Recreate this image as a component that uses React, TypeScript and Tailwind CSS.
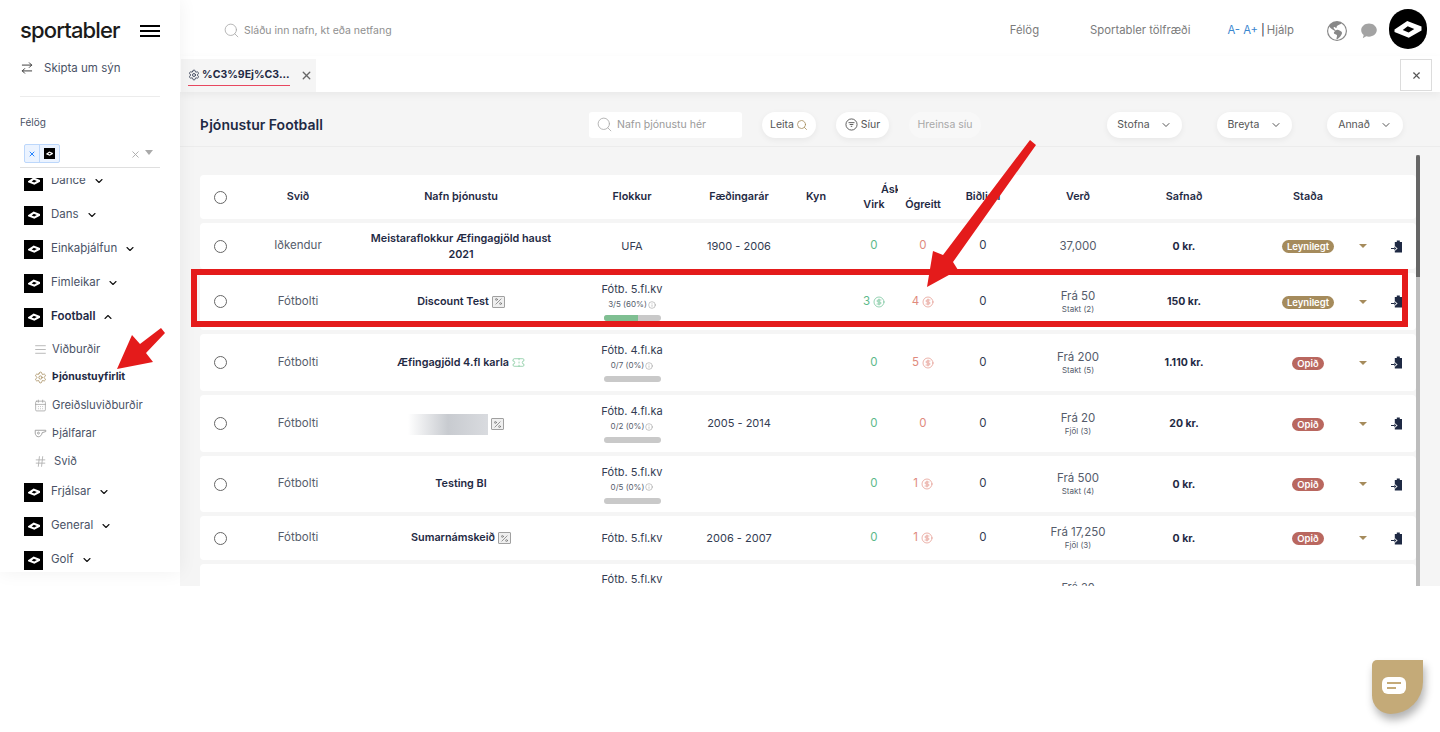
import React from "react";
import { ArrowRightLeft, Search, ChevronDown, ChevronUp, Settings, X, CalendarDays, Hash, AlignJustify, CircleDollarSign, Percent, Ticket, Info } from "lucide-react";
import { BsGlobeAmericas } from "react-icons/bs";

const GRID = "grid grid-cols-[40px_116px_210px_132px_82px_72px_44px_54px_66px_124px_88px_40px_80px_30px_38px] items-center shrink-0";

function Glyph({ className = "" }: { className?: string }) {
  return (
    <svg viewBox="0 0 24 24" className={className} fill="#fff" fillRule="evenodd">
      <path d="M3 12.4 L11.5 6.6 L21 10.4 L21 13 L12.500 17.800 L3 14 Z M8.500 12.600 L12.400 14.400 L16.200 12 L11.800 10.200 Z" />
    </svg>
  );
}

function SportIcon() {
  return (
    <span className="flex w-[19px] h-[19px] bg-black items-center justify-center shrink-0">
      <Glyph className="w-[16px] h-[16px]" />
    </span>
  );
}

function SideItem({ label, open, bold }: { label: string; open?: boolean; bold?: boolean }) {
  return (
    <div className="h-[34px] flex items-center pl-6">
      <SportIcon />
      <span className={`ml-2 text-[11.5px] ${bold ? "font-semibold text-[#1f2a44]" : "text-[#4a5266]"}`}>{label}</span>
      {open ? <ChevronUp className="ml-[7px] w-[12px] h-[12px] text-[#111]" strokeWidth={2.2} /> : <ChevronDown className="ml-[7px] w-[12px] h-[12px] text-[#111]" strokeWidth={2.2} />}
    </div>
  );
}

function Whistle() {
  return (
    <svg viewBox="0 0 16 16" className="w-[13px] h-[13px]" fill="none" stroke="#999" strokeWidth="1.1">
      <path d="M1.500 4h13v1.600l-4.500 1.400c-.3 3-2.300 5-4.700 5C3 12 1.500 9.500 1.500 7.500Z" />
      <circle cx="5.500" cy="7.500" r="1.200" />
    </svg>
  );
}

function SubItem({ icon, label, bold, pad = "ml-[5px]" }: { icon: React.ReactNode; label: string; bold?: boolean; pad?: string }) {
  return (
    <div className="h-[28px] flex items-center pl-[33px]">
      <span className="w-[14px] flex justify-center shrink-0">{icon}</span>
      <span className={`${pad} ${bold ? "text-[10.500px] font-bold text-[#1f2a44]" : "text-[11.3px] text-[#4a5266]"}`}>{label}</span>
    </div>
  );
}

function Sidebar() {
  return (
    <aside className="w-[180px] h-[572px] shrink-0 bg-white flex flex-col shadow-[0_0_18px_rgba(0,0,0,0.06)] relative z-10">
      <div className="h-[56px] shrink-0 pl-5 pr-5 flex items-center justify-between">
        <span className="text-[22px] font-medium tracking-[-0.85px] text-[#1b1b1b] leading-none mt-[3px]">sportabler</span>
        <span className="flex flex-col gap-[3px] mt-[6px]">
          <span className="w-5 h-[2px] bg-black" />
          <span className="w-5 h-[2px] bg-black" />
          <span className="w-5 h-[2px] bg-black" />
        </span>
      </div>
      <div className="mx-5 h-[41px] shrink-0 border-b border-[#ececec] flex items-start pt-[4px]">
        <ArrowRightLeft className="w-[14px] h-[14px] text-[#333] mt-[1px]" strokeWidth={1.6} />
        <span className="ml-[10px] text-[11.5px] text-[#4a5266]">Skipta um sýn</span>
      </div>
      <div className="mx-5 mt-[18px] text-[10px] leading-[14px] text-[#4a5266]">Félög</div>
      <div className="mx-5 mt-[15px] h-[24px] border-b border-[#dfdfdf] flex items-start pl-1 pr-1 shrink-0">
        <span className="flex h-[19px] w-[36px] border border-[#bcd7fb] rounded-[2px] bg-[#ebf3ff]">
          <span className="w-[15px] flex items-center justify-center border-r border-[#bcd7fb]">
            <X className="w-[8px] h-[8px] text-[#2684ff]" strokeWidth={3} />
          </span>
          <span className="flex-1 flex items-center justify-center">
            <span className="flex w-[11px] h-[11px] bg-black items-center justify-center"><Glyph className="w-[9px] h-[9px]" /></span>
          </span>
        </span>
        <X className="ml-auto mt-[5px] w-[11px] h-[11px] text-[#aaa]" strokeWidth={2} />
        <span className="ml-[4px] mt-[6px] mr-[3px] w-0 h-0 border-l-[4px] border-r-[4px] border-t-[5px] border-l-transparent border-r-transparent border-t-[#aaa]" />
      </div>
      <div className="flex-1 overflow-hidden mt-[10px]">
        <div className="-mt-[14px]">
          <SideItem label="Dance" />
          <SideItem label="Dans" />
          <SideItem label="Einkaþjálfun" />
          <SideItem label="Fimleikar" />
          <SideItem label="Football" open bold />
          <div className="mt-[1px]">
            <SubItem icon={<AlignJustify className="w-[13px] h-[13px] text-[#aaa]" strokeWidth={1.5} />} label="Viðburðir" />
            <SubItem icon={<Settings className="w-[13px] h-[13px] text-[#a58b5c]" strokeWidth={1.5} />} label="Þjónustuyfirlit" bold />
            <SubItem icon={<CalendarDays className="w-[13px] h-[13px] text-[#999]" strokeWidth={1.3} />} label="Greiðsluviðburðir" />
            <SubItem icon={<Whistle />} label="Þjálfarar" />
            <SubItem icon={<Hash className="w-[13px] h-[13px] text-[#aaa]" strokeWidth={1.5} />} label="Svið" pad="ml-[7px]" />
          </div>
          <SideItem label="Frjálsar" />
          <SideItem label="General" />
          <SideItem label="Golf" />
        </div>
      </div>
    </aside>
  );
}

function TopBar() {
  return (
    <div className="h-[56px] flex items-center shrink-0 bg-white pl-[43px] pt-[5px]">
      <Search className="w-[17px] h-[17px] text-[#aaa]" strokeWidth={1.2} />
      <span className="ml-[4px] text-[10.500px] text-[#8f8f8f]">Sláðu inn nafn, kt eða netfang</span>
      <span className="ml-auto text-[11.3px] text-[#7b7b7b]">Félög</span>
      <span className="ml-[51px] text-[11.3px] text-[#7b7b7b]">Sportabler tölfræði</span>
      <span className="ml-[37px] text-[11.3px] text-[#3a86cf]">A- A+</span>
      <span className="ml-[3px] text-[11.3px] text-[#1f2a44]">|</span>
      <span className="ml-[2px] text-[11.3px] text-[#7b7b7b]">Hjálp</span>
      <BsGlobeAmericas className="ml-[33px] w-[20px] h-[20px] text-[#888]" />
      <svg viewBox="0 0 18 18" className="ml-[13px] w-[18px] h-[18px]" fill="#a3a3a3">
        <path d="M9 1.500c4.300 0 7.800 2.900 7.800 6.600S13.300 14.700 9 14.700c-1 0-1.900-.1-2.800-.4L2.800 16.300l.9-3.200C2 11.900 1.200 10.100 1.200 8.100 1.200 4.400 4.700 1.500 9 1.500Z" />
      </svg>
      <span className="ml-[11px] mr-[13px] -mt-[3px] flex w-[38px] h-[40px] rounded-full bg-black items-center justify-center">
        <Glyph className="w-[36px] h-[36px]" />
      </span>
    </div>
  );
}

function TabBar() {
  return (
    <div className="h-[36px] shrink-0 bg-white flex items-end relative z-[1] shadow-[0_3px_8px_rgba(0,0,0,0.05)]">
      <div className="w-[135px] ml-[1px] h-[33px] bg-[#f5f5f5] flex items-center pl-[7px]">
        <span className="flex items-center h-[20px] w-[102px] border-b border-[#e8475f] pb-[1px]">
          <Settings className="w-[12px] h-[12px] text-[#3a4258]" strokeWidth={1.8} />
          <span className="ml-[2px] text-[10.500px] font-bold text-[#1f2a44] whitespace-nowrap">%C3%9Ej%C3...</span>
        </span>
        <X className="ml-[10px] w-[13px] h-[13px] text-[#666]" strokeWidth={2.5} />
      </div>
      <span className="ml-auto mr-[8px] mb-[1px] flex w-[32px] h-[32px] border border-[#dcdcdc] items-center justify-center">
        <X className="w-[11px] h-[11px] text-[#555]" strokeWidth={2.5} />
      </span>
    </div>
  );
}

function Pill({ label, className = "" }: { label: string; className?: string }) {
  return (
    <span className={`flex w-[75px] h-[26px] rounded-full bg-white items-center justify-center text-[10.500px] text-[#555] shadow-[0_2px_6px_rgba(0,0,0,0.06)] ${className}`}>
      {label}
      <ChevronDown className="ml-[10px] w-[12px] h-[12px] text-[#555]" strokeWidth={2} />
    </span>
  );
}

function PageHeader() {
  return (
    <div className="h-[55px] shrink-0 border-b border-[#ececec] flex items-center pl-5 pt-[11px]">
      <h1 className="w-[389px] text-[14px] font-semibold text-[#1f2a44]">Þjónustur Football</h1>
      <span className="flex w-[153px] h-[26px] bg-white rounded-[3px] items-center pl-[7px]">
        <Search className="w-[17px] h-[17px] text-[#aaa]" strokeWidth={1.2} />
        <span className="ml-[4px] text-[10.500px] text-[#9a9a9a]">Nafn þjónustu hér</span>
      </span>
      <span className="ml-5 flex w-[54px] h-[26px] rounded-full bg-white items-center justify-center text-[10.500px] text-[#555] shadow-[0_2px_6px_rgba(0,0,0,0.06)]">
        Leita
        <Search className="ml-[2px] w-[12px] h-[12px] text-[#a58b5c]" strokeWidth={1.6} />
      </span>
      <span className="ml-5 flex w-[53px] h-[26px] rounded-full bg-white items-center justify-center text-[10.500px] text-[#555] shadow-[0_2px_6px_rgba(0,0,0,0.06)]">
        <svg viewBox="0 0 14 14" className="w-[13px] h-[13px] mr-[3px]" fill="none" stroke="#555" strokeWidth="1">
          <circle cx="7" cy="7" r="6" />
          <path d="M3.800 5h6.400M5 7h4M6.200 9h1.600" />
        </svg>
        Síur
      </span>
      <span className="ml-5 flex w-[72px] h-[26px] rounded-full bg-[#f8f8f8] items-center justify-center text-[10.500px] text-[#a8a8a8]">Hreinsa síu</span>
      <Pill label="Stofna" className="ml-[126px]" />
      <Pill label="Breyta" className="ml-[35px]" />
      <Pill label="Annað" className="ml-[35px] w-[76px]" />
    </div>
  );
}

function PercentBadge() {
  return (
    <span className="inline-flex w-[13px] h-[12px] border border-[#a0a0a0] rounded-[1px] items-center justify-center ml-[3px] align-middle bg-[#efefef]">
      <Percent className="w-[9px] h-[9px] text-[#777]" strokeWidth={2} />
    </span>
  );
}

type Row = {
  h: string; svid: string; name?: React.ReactNode; cat: string; sub?: string; pct?: number; years?: string;
  virk: number; unpaid: number; wait: number; price: string; priceSub?: string; total: string; status: string; dollarV?: boolean; dollarU?: boolean;
};

const rows: Row[] = [
  { h: "h-[46px]", svid: "Iðkendur", name: <span className="block leading-4">Meistaraflokkur Æfingagjöld haust<br />2021</span>, cat: "UFA", years: "1900 - 2006", virk: 0, unpaid: 0, wait: 0, price: "37,000", total: "0 kr.", status: "Leynilegt" },
  { h: "h-[57px]", svid: "Fótbolti", name: <>Discount Test<PercentBadge /></>, cat: "Fótb. 5.fl.kv", sub: "3/5 (60%)", pct: 60, virk: 3, unpaid: 4, wait: 0, price: "Frá 50", priceSub: "Stakt (2)", total: "150 kr.", status: "Leynilegt", dollarV: true, dollarU: true },
  { h: "h-[57px]", svid: "Fótbolti", name: <>Æfingagjöld 4.fl karla<Ticket className="inline w-[13px] h-[13px] ml-[3px] text-[#7fc79a] align-middle" strokeWidth={1.4} /></>, cat: "Fótb. 4.fl.ka", sub: "0/7 (0%)", pct: 0, virk: 0, unpaid: 5, wait: 0, price: "Frá 200", priceSub: "Stakt (5)", total: "1.110 kr.", status: "Opið", dollarU: true },
  { h: "h-[57px]", svid: "Fótbolti", name: <span className="flex items-center justify-center pr-[10px]"><span className="w-[80px] h-[21px] bg-linear-to-r from-white via-[#c8cbd0] to-[#d9dbdf]" /><PercentBadge /></span>, cat: "Fótb. 4.fl.ka", sub: "0/2 (0%)", pct: 0, years: "2005 - 2014", virk: 0, unpaid: 0, wait: 0, price: "Frá 20", priceSub: "Fjöl (3)", total: "20 kr.", status: "Opið" },
  { h: "h-[56px]", svid: "Fótbolti", name: "Testing BI", cat: "Fótb. 5.fl.kv", sub: "0/5 (0%)", pct: 0, virk: 0, unpaid: 1, wait: 0, price: "Frá 500", priceSub: "Stakt (4)", total: "0 kr.", status: "Opið", dollarU: true },
  { h: "h-[44px]", svid: "Fótbolti", name: <>Sumarnámskeið<PercentBadge /></>, cat: "Fótb. 5.fl.kv", years: "2006 - 2007", virk: 0, unpaid: 1, wait: 0, price: "Frá 17,250", priceSub: "Fjöl (3)", total: "0 kr.", status: "Opið", dollarU: true },
];

function Radio() {
  return <span className="block w-[13px] h-[13px] rounded-full border border-[#666] mx-auto" />;
}

function ClipIcon() {
  return (
    <svg viewBox="0 0 12 13" className="w-[12px] h-[13px] mx-auto">
      <path fill="#1f2a44" d="M3.800 2h2V.6h3V2h2.200v10.500H3.800Z" />
      <path stroke="#fff" strokeWidth="2.400" d="M0 8.500h5" />
      <path fill="#fff" d="M3.500 5.700 6.600 8.500 3.500 11.300Z" />
      <path stroke="#1f2a44" strokeWidth="1" d="M0 8.500h3.500" />
      <path fill="#1f2a44" d="M3.400 6.700 5.400 8.500 3.400 10.300Z" />
    </svg>
  );
}

function DataRow({ r }: { r: Row }) {
  return (
    <div className={`${GRID} ${r.h} bg-white rounded-[4px] text-[11.5px] text-center text-[#333c52]`}>
      <Radio />
      <div className="text-[#555c6b]">{r.svid}</div>
      <div className="font-semibold text-[10.800px] text-[#1f2a44] mt-[1px]">{r.name}</div>
      <div className="flex flex-col items-center">
        <span className="leading-[14px] text-[11px]">{r.cat}</span>
        {r.sub && (
          <>
            <span className="mt-[3px] flex items-center text-[8px] leading-[11px] text-[#555c6b]">{r.sub}<Info className="ml-[1px] w-[8px] h-[8px] text-[#888]" strokeWidth={1.4} /></span>
            <span className="mt-[5px] block w-[57px] h-[6px] rounded-full bg-[#c9c9c9] overflow-hidden">
              <span className="block h-full bg-[#7fbf92]" style={{ width: `${r.pct}%` }} />
            </span>
          </>
        )}
      </div>
      <div className="text-[11px]">{r.years}</div>
      <div />
      <div className="flex items-center justify-center text-[#5db98a]">
        {r.virk}
        {r.dollarV && <CircleDollarSign className="ml-[3px] w-[12px] h-[12px]" strokeWidth={1.3} />}
      </div>
      <div className="flex items-center justify-center text-[#e08a7d]">
        {r.unpaid}
        {r.dollarU && <CircleDollarSign className="ml-[3px] w-[12px] h-[12px]" strokeWidth={1.3} />}
      </div>
      <div>{r.wait}</div>
      <div className="flex flex-col items-center">
        <span className="leading-[15px] text-[#555c6b]">{r.price}</span>
        {r.priceSub && <span className="leading-[11px] text-[8px] text-[#555c6b]">{r.priceSub}</span>}
      </div>
      <div className="font-bold text-[10.500px] text-[#1f2a44] mt-[1px]">{r.total}</div>
      <div />
      <div className="flex justify-center mt-[1px]">
        <span className={`px-[5px] h-[13px] leading-[13px] rounded-full text-white text-[9.500px] font-semibold ${r.status === "Opið" ? "bg-[#b9675f]" : "bg-[#a58b5c]"}`}>{r.status}</span>
      </div>
      <div className="flex justify-center">
        <span className="w-0 h-0 border-l-[4px] border-r-[4px] border-t-[4px] border-l-transparent border-r-transparent border-t-[#a58b5c]" />
      </div>
      <ClipIcon />
    </div>
  );
}

function Table() {
  return (
    <div className="flex-1 flex overflow-hidden pl-5">
      <div className="w-[1216px] pt-[28px] flex flex-col gap-[4px] shrink-0">
        <div className={`${GRID} h-[44px] bg-white rounded-[4px] text-center text-[10.800px] font-semibold text-[#1f2a44]`}>
          <Radio />
          <div>Svið</div>
          <div>Nafn þjónustu</div>
          <div>Flokkur</div>
          <div>Fæðingarár</div>
          <div>Kyn</div>
          <div className="col-span-2 flex flex-col">
            <span className="ml-[29px] w-[17px] overflow-hidden whitespace-nowrap text-left leading-[15px]">Áskrifendur</span>
            <span className="grid grid-cols-[44px_54px] leading-[15px]">
              <span>Virk</span>
              <span>Ógreitt</span>
            </span>
          </div>
          <div>Biðlisti</div>
          <div>Verð</div>
          <div>Safnað</div>
          <div />
          <div>Staða</div>
          <div />
          <div />
        </div>
        {rows.map((r, i) => (
          <DataRow key={i} r={r} />
        ))}
        <div className={`${GRID} h-[57px] bg-white rounded-[4px] text-center text-[11px] text-[#333c52] items-start pt-[8px]`}>
          <div />
          <div />
          <div />
          <div className="leading-[14px]">Fótb. 5.fl.kv</div>
          <div />
          <div />
          <div />
          <div />
          <div />
          <div className="mt-[8px] leading-[15px] text-[#555c6b]">Frá 20</div>
        </div>
      </div>
      <div className="w-[4px] shrink-0 mt-[8px] flex flex-col bg-[#bdbdbd]">
        <span className="h-[122px] bg-[#666] rounded-t-full" />
      </div>
    </div>
  );
}

function Overlays() {
  return (
    <>
      <div className="absolute left-[191px] top-[269px] w-[1217px] h-[58px] border-[6px] border-[#e41b1b] z-20" />
      <svg className="absolute left-0 top-0 z-30 pointer-events-none" width="1440" height="732" fill="#e41b1b">
        <polygon points="1030,140 1036,145 953,262 958,270 927,287 933,251 943,255" />
        <polygon points="161,328 165,333 146,353 153,362 117,369 132,335 140,344" />
      </svg>
      <div className="absolute left-[1372px] top-[660px] w-[51px] h-[54px] bg-[#c4aa78] rounded-[6px_0_38px_22px] shadow-[2px_6px_8px_rgba(0,0,0,0.3)] flex items-center justify-start pl-[10px] pb-[4px] z-30">
        <span className="flex flex-col gap-[3px] justify-center items-start pl-[5px] w-[24px] h-[17px] bg-white rounded-[6px]">
          <span className="block w-[14px] h-[2px] bg-[#c4aa78]" />
          <span className="block w-[9px] h-[2px] bg-[#c4aa78]" />
        </span>
      </div>
    </>
  );
}

export default function App() {
  return (
    <div className="relative h-[732px] w-[1440px] overflow-hidden bg-white font-['Inter',sans-serif]">
      <div className="flex h-[586px]">
        <Sidebar />
        <main className="flex-1 flex flex-col min-w-0 bg-[#f5f5f5]">
          <TopBar />
          <TabBar />
          <PageHeader />
          <Table />
        </main>
      </div>
      <Overlays />
    </div>
  );
}
